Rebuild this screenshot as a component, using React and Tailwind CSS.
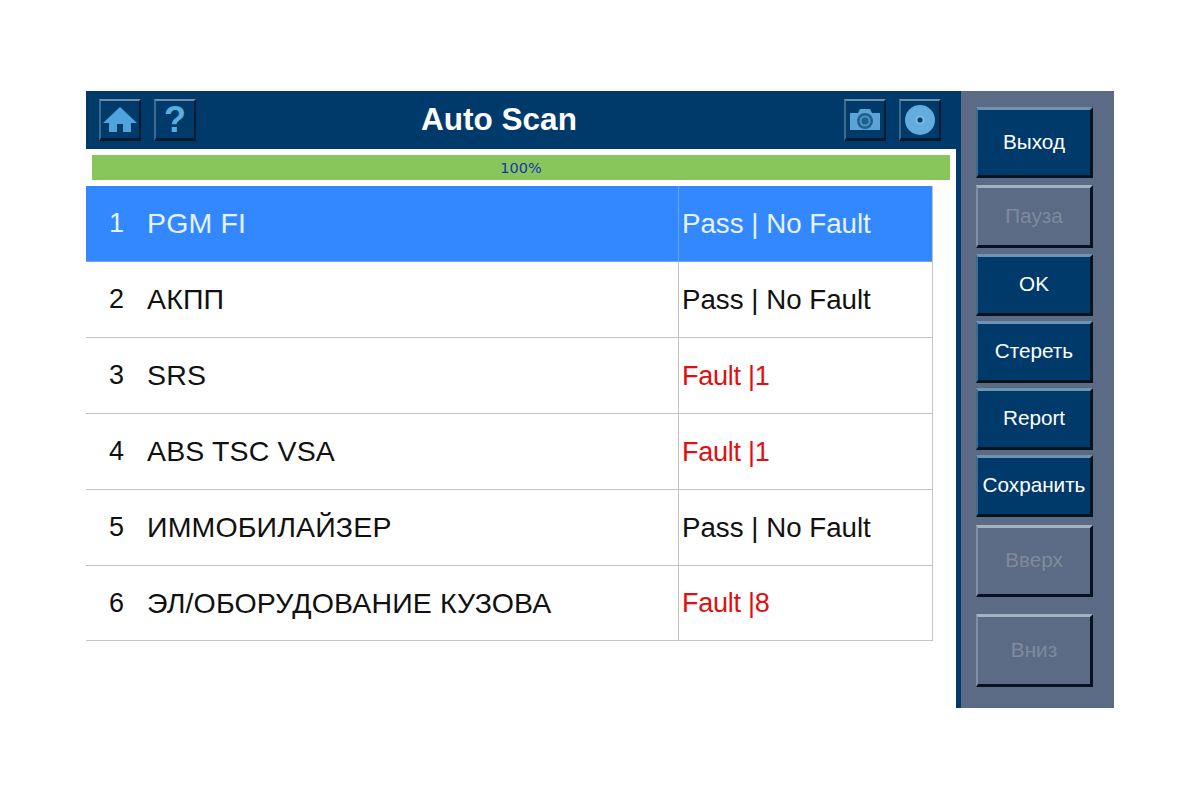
import React from "react";

const rows = [
  { no: 1, name: "PGM FI", status: "Pass | No Fault", active: true },
  { no: 2, name: "АКПП", status: "Pass | No Fault" },
  { no: 3, name: "SRS", status: "Fault |1", fault: true },
  { no: 4, name: "ABS TSC VSA", status: "Fault |1", fault: true },
  { no: 5, name: "ИММОБИЛАЙЗЕР", status: "Pass | No Fault" },
  { no: 6, name: "ЭЛ/ОБОРУДОВАНИЕ КУЗОВА", status: "Fault |8", fault: true },
];

const IconButton = ({ children, className = "" }) => (
  <button
    className={`flex items-center justify-center w-[42px] h-[42px] bg-[#003a6b] border-t-2 border-l-2 border-t-[#6f8fa8] border-l-[#3f6a8c] border-r-2 border-b-[3px] border-r-[#021a30] border-b-[#021a30] ${className}`}
  >
    {children}
  </button>
);

const SideButton = ({ label, height, disabled, className = "" }) => (
  <button
    className={`w-[117px] flex items-center justify-center pb-[2px] text-[20.7px] border-t-[3px] border-l-2 border-r-[3px] border-b-[3px] border-r-[#06121f] border-b-[#06121f] ${
      disabled
        ? "bg-[#5b6b85] text-[#7f8a9c] border-t-[#a3b1c2] border-l-[#7f90a6]"
        : "bg-[#003a6b] text-white border-t-[#6f93b3] border-l-[#3f6a8c]"
    } ${height} ${className}`}
  >
    {label}
  </button>
);

const App = () => {
  return (
    <div className="w-[1200px] h-[800px] bg-white pt-[91px] pl-[86px] font-['Liberation_Sans',Arial,sans-serif]">
      <div className="flex w-[1028px] h-[617px]">
        {/* main area */}
        <div className="w-[870px] flex flex-col bg-white">
          <div className="w-[875px] h-[58px] shrink-0 bg-[#003a6b] flex items-center pl-[13px] pr-[20px]">
            <IconButton>
              <svg width="34" height="26" viewBox="0 0 34 26">
                <path d="M17 0 L34 16 L28 16 L28 25 L20 25 L20 17 L14 17 L14 25 L6 25 L6 16 L0 16 Z" fill="#4ea5dc" />
              </svg>
            </IconButton>
            <IconButton className="ml-[13px]">
              <span className="text-[#5aaedd] text-[36px] font-bold leading-none">?</span>
            </IconButton>
            <div className="flex-1 text-center text-white text-[31.5px] font-bold pr-[42px]">Auto Scan</div>
            <IconButton>
              <svg width="30" height="22" viewBox="0 0 30 22">
                <path d="M0 4 H8 L10 0 H20 L22 4 H30 V21 H0 Z" fill="#5aa5d5" />
                <circle cx="15" cy="12" r="8" fill="#1f5f8f" />
                <circle cx="15" cy="12" r="5.5" fill="#4e93c2" />
                <circle cx="15" cy="12" r="3.5" fill="#1f5f8f" />
              </svg>
            </IconButton>
            <IconButton className="ml-[13px]">
              <svg width="30" height="30" viewBox="0 0 30 30">
                <circle cx="15" cy="15" r="15" fill="#62addd" />
                <circle cx="15" cy="15" r="5" fill="#74b8e2" />
                <circle cx="15" cy="15" r="2.5" fill="#003a6b" />
              </svg>
            </IconButton>
          </div>

          <div className="mt-[6px] ml-[6px] w-[858px] h-[25px] shrink-0 bg-[#88c65c] flex items-center justify-center pt-[2px]">
            <span className="text-[#1a34b0] text-[14.5px] font-['DejaVu_Sans',sans-serif]">100%</span>
          </div>

          <div className="mt-[6px] w-[847px] border-r border-[#c4c4c4]">
            {rows.map((row) => (
              <div
                key={row.no}
                className={`flex items-center border-b ${row.no === 6 ? "h-[75px]" : "h-[76px]"} ${
                  row.active ? "bg-[#3388ff] text-[#e6f2ff] border-[#6aa6f5]" : "border-[#c4c4c4] text-[#111111]"
                }`}
              >
                <div className="w-[61px] pl-[23px] shrink-0 text-[27px]">{row.no}</div>
                <div className="w-[531px] shrink-0 text-[28.5px] tracking-[0.15px]">{row.name}</div>
                <div
                  className={`h-full flex-1 flex items-center pl-[3px] pt-[1px] border-l ${
                    row.active ? "border-[#6aa6f5]" : "border-[#c4c4c4]"
                  } ${row.fault ? "text-[#e01010] text-[27px] tracking-[-0.25px]" : "text-[27.7px]"}`}
                >
                  {row.status}
                </div>
              </div>
            ))}
          </div>
        </div>

        {/* side panel */}
        <div className="w-[158px] ml-0 border-l-[5px] border-[#003a6b] bg-[#5b6b85] flex flex-col pl-[15px] pt-[16px] shrink-0">
          <SideButton label="Выход" height="h-[71px]" />
          <SideButton label="Пауза" height="h-[63px]" disabled className="mt-[7px]" />
          <SideButton label="OK" height="h-[62px]" className="mt-[6px]" />
          <SideButton label="Стереть" height="h-[62px]" className="mt-[5px]" />
          <SideButton label="Report" height="h-[62px]" className="mt-[5px]" />
          <SideButton label="Сохранить" height="h-[62px]" className="mt-[5px]" />
          <SideButton label="Вверх" height="h-[72px]" disabled className="mt-[8px]" />
          <SideButton label="Вниз" height="h-[73px]" disabled className="mt-[17px]" />
        </div>
      </div>
    </div>
  );
};

export default App;
